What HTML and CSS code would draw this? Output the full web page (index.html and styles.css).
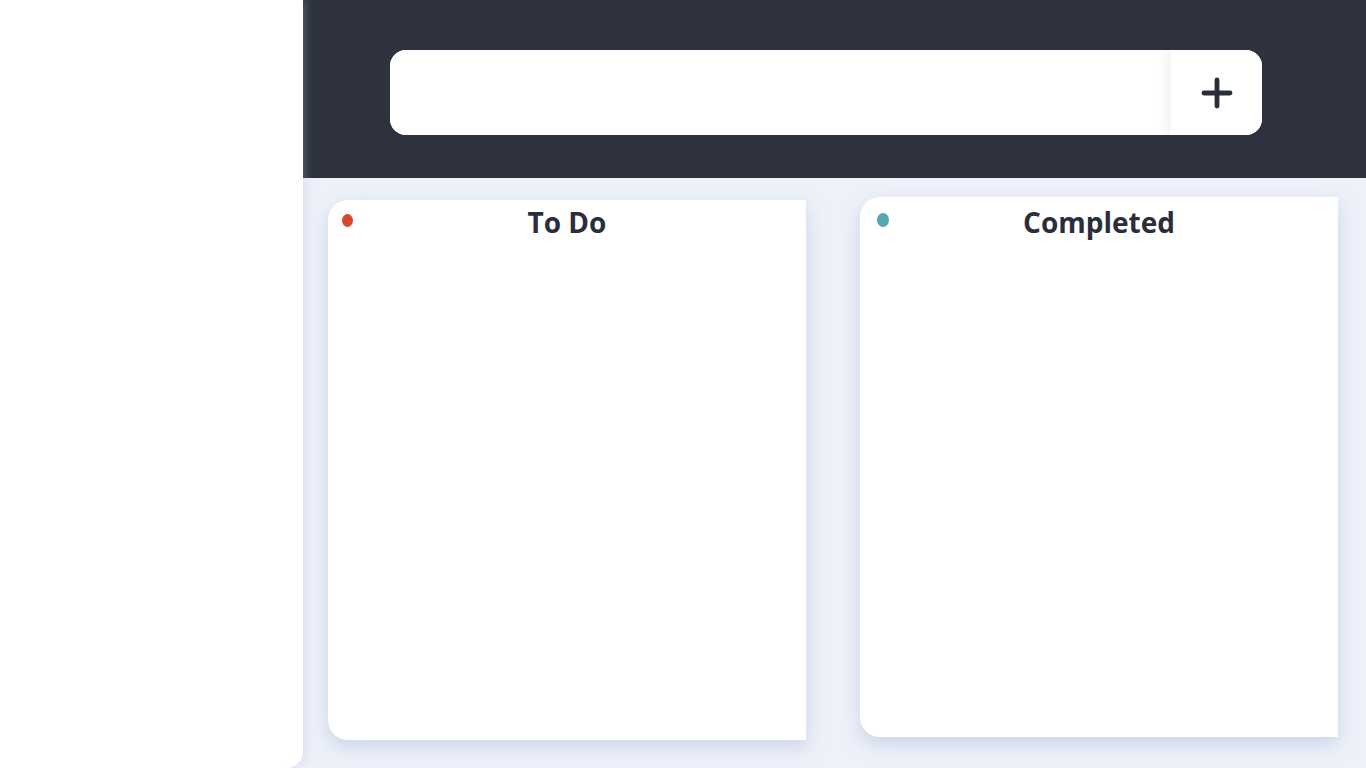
FILE: index.html
```html
<!DOCTYPE html>
<html>
<head>
<meta charset="utf-8">
<link rel="stylesheet" href="styles.css">
</head>
<body>
<aside class="sidebar"></aside>
<main class="main">
  <header class="header">
    <form class="add-form">
      <input class="add-input" type="text">
      <button class="add-btn" type="button" aria-label="Add">
        <svg width="32" height="32" viewBox="0 0 32 32"><path d="M16 3v26M3 16h26" stroke="#2a2e3a" stroke-width="4.8" stroke-linecap="round" fill="none"/></svg>
      </button>
    </form>
  </header>
  <section class="board">
    <div class="column todo">
      <span class="dot dot-red"></span>
      <h2 class="column-title">To Do</h2>
    </div>
    <div class="column done">
      <span class="dot dot-teal"></span>
      <h2 class="column-title">Completed</h2>
    </div>
  </section>
</main>
</body>
</html>
```
FILE: styles.css
```css
* { box-sizing: border-box; }
html, body { margin: 0; height: 100%; }
body {
  display: flex;
  background: #edf1f9;
  font-family: "Open Sans", "Noto Sans", sans-serif;
  overflow: hidden;
}
.sidebar {
  width: 303px;
  flex: none;
  height: 768px;
  background: #fff;
  border-bottom-right-radius: 16px;
  box-shadow: 2px 0 10px rgba(170, 180, 210, 0.35);
  position: relative;
  z-index: 2;
}
.main {
  flex: 1;
  display: flex;
  flex-direction: column;
}
.header {
  height: 178px;
  background: #2e323e;
  padding: 50px 104px 0 87px;
}
.add-form {
  display: flex;
  height: 85px;
  background: #fff;
  border-radius: 16px;
  overflow: hidden;
}
.add-input {
  flex: 1;
  border: 0;
  outline: 0;
  padding: 0 24px;
  font: inherit;
  font-size: 20px;
  background: #fff;
}
.add-btn {
  width: 91px;
  border: 0;
  background: #fff;
  display: flex;
  align-items: center;
  justify-content: center;
  box-shadow: -6px 0 10px rgba(40, 50, 80, 0.06);
  padding: 0;
  padding-top: 1px;
}
.board {
  display: flex;
  gap: 54px;
  padding: 19px 28px 0 25px;
  align-items: flex-start;
}
.column {
  width: 478px;
  height: 540px;
  background: #fff;
  border-radius: 20px 0 0 20px;
  box-shadow: 0 7px 18px rgba(150, 165, 205, 0.38);
  position: relative;
  padding-top: 2px;
}
.todo { margin-top: 3px; }
.done { padding-top: 5px; }
.dot {
  position: absolute;
  left: 14px;
  top: 14px;
  width: 11px;
  height: 13px;
  border-radius: 50%;
}
.done .dot { left: 17px; top: 16px; width: 12px; height: 14px; }
.dot-red { background: #d8472f; }
.dot-teal { background: #56a6b1; }
.column-title {
  margin: 0;
  text-align: center;
  font-size: 28px;
  font-weight: 700;
  color: #2a2e3a;
  line-height: 40px;
}
```
